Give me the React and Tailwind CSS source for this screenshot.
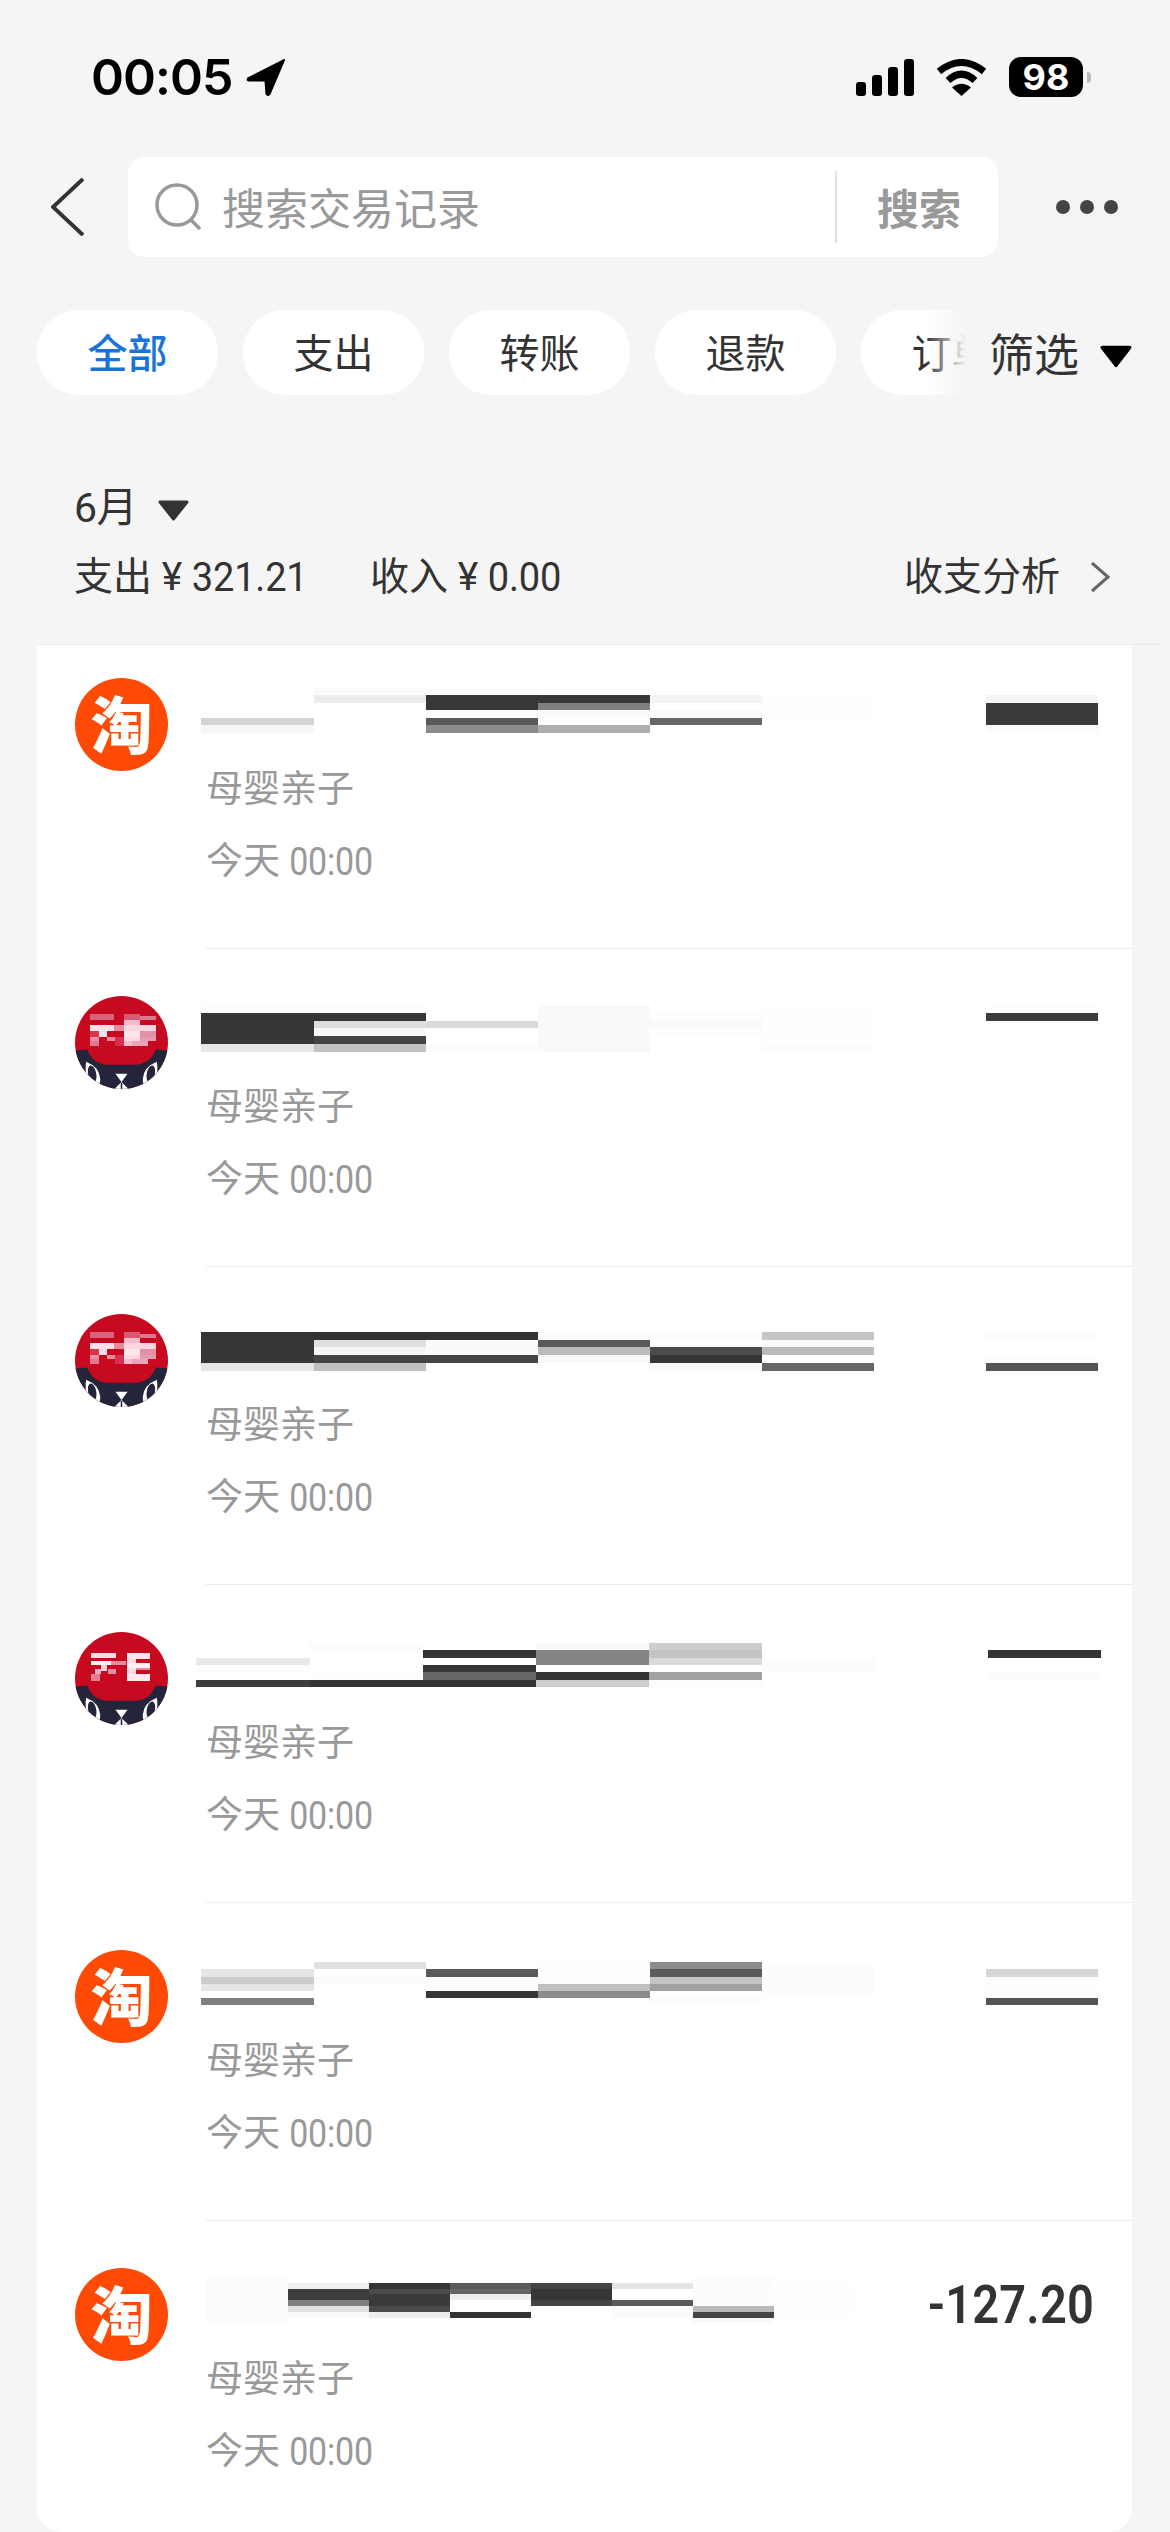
import React from "react";

const c = (x1, x2, ...bands) => bands.map(([y1, y2, fill]) => [x1, y1, x2 - x1, y2 - y1, fill]);

const M1 = [
  ...c(201, 314, [718, 725, "#d4d4d4"], [725, 733, "#f6f6f6"]),
  ...c(314, 426, [688, 695, "#fafafa"], [695, 703, "#ececec"]),
  ...c(426, 538, [688, 695, "#fafafa"], [695, 710, "#373737"], [710, 718, "#fafafa"], [718, 725, "#5a5a5a"], [725, 733, "#8c8c8c"]),
  ...c(538, 650, [688, 695, "#fdfdfd"], [695, 703, "#383838"], [703, 710, "#808080"], [710, 718, "#fafafa"], [718, 725, "#fdfdfd"], [725, 733, "#aeaeae"]),
  ...c(650, 762, [695, 703, "#f3f3f3"], [710, 718, "#fafafa"], [718, 725, "#666666"]),
  ...c(762, 873, [695, 718, "#fdfdfd"]),
  ...c(986, 1098, [695, 703, "#f5f5f5"], [703, 725, "#3a3a3a"], [725, 733, "#fbfbfb"]),
];

const M2 = [
  ...c(201, 314, [1005, 1013, "#fdfdfd"], [1013, 1044, "#363636"], [1044, 1052, "#e6e6e6"]),
  ...c(314, 426, [1005, 1013, "#fdfdfd"], [1013, 1021, "#363636"], [1021, 1028, "#dedede"], [1028, 1036, "#f8f8f8"], [1036, 1044, "#444444"], [1044, 1052, "#c2c2c2"]),
  ...c(426, 538, [1021, 1028, "#dadada"], [1044, 1052, "#fcfcfc"]),
  ...c(538, 650, [1005, 1052, "#f9f9f9"]),
  ...c(650, 762, [1013, 1036, "#fdfdfd"], [1021, 1028, "#f9f9f9"]),
  ...c(762, 873, [1005, 1044, "#fefefe"], [1044, 1052, "#fcfcfc"]),
  ...c(986, 1098, [1005, 1013, "#fdfdfd"], [1013, 1021, "#3c3c3c"]),
];

const M3 = [
  ...c(201, 314, [1332, 1363, "#363636"], [1363, 1371, "#e6e6e6"]),
  ...c(314, 426, [1332, 1340, "#333333"], [1340, 1347, "#e0e0e0"], [1347, 1355, "#f5f5f5"], [1355, 1363, "#444444"], [1363, 1371, "#c0c0c0"]),
  ...c(426, 538, [1332, 1340, "#333333"], [1340, 1355, "#fafafa"], [1355, 1363, "#444444"]),
  ...c(538, 650, [1332, 1340, "#fcfcfc"], [1340, 1347, "#5a5a5a"], [1347, 1355, "#bbbbbb"], [1355, 1363, "#f8f8f8"]),
  ...c(650, 762, [1332, 1340, "#fbfbfb"], [1347, 1355, "#4c4c4c"], [1355, 1363, "#363636"], [1363, 1371, "#fafafa"]),
  ...c(762, 874, [1332, 1340, "#c6c6c6"], [1340, 1347, "#fbfbfb"], [1347, 1355, "#bbbbbb"], [1363, 1371, "#666666"]),
  ...c(986, 1098, [1332, 1340, "#fcfcfc"], [1355, 1363, "#fcfcfc"], [1363, 1371, "#555555"]),
];

const M4 = [
  ...c(196, 310, [1658, 1665, "#e8e8e8"], [1665, 1672, "#fbfbfb"], [1680, 1687, "#3c3c3c"]),
  ...c(310, 423, [1643, 1650, "#fbfbfb"], [1672, 1680, "#fdfdfd"], [1680, 1687, "#333333"]),
  ...c(423, 536, [1650, 1658, "#333333"], [1665, 1672, "#363636"], [1672, 1680, "#666666"], [1680, 1687, "#333333"]),
  ...c(536, 649, [1643, 1650, "#f9f9f9"], [1650, 1665, "#858585"], [1672, 1680, "#333333"], [1680, 1687, "#cccccc"]),
  ...c(649, 762, [1643, 1650, "#cecece"], [1650, 1658, "#c4c4c4"], [1658, 1665, "#dadada"], [1672, 1680, "#a2a2a2"], [1680, 1687, "#fcfcfc"]),
  ...c(762, 875, [1658, 1672, "#fcfcfc"]),
  ...c(988, 1101, [1650, 1658, "#343434"], [1672, 1680, "#fcfcfc"]),
];

const M5 = [
  ...c(201, 314, [1969, 1977, "#e6e6e6"], [1977, 1984, "#cccccc"], [1984, 1991, "#e6e6e6"], [1998, 2005, "#808080"]),
  ...c(314, 426, [1962, 1969, "#e0e0e0"], [1977, 1984, "#fbfbfb"]),
  ...c(426, 538, [1969, 1977, "#5a5a5a"], [1977, 1991, "#fdfdfd"], [1991, 1998, "#363636"]),
  ...c(538, 650, [1962, 1984, "#fdfdfd"], [1984, 1991, "#c0c0c0"], [1991, 1998, "#8c8c8c"]),
  ...c(650, 762, [1962, 1969, "#8c8c8c"], [1969, 1977, "#5a5a5a"], [1977, 1984, "#c4c4c4"], [1984, 1991, "#a0a0a0"], [1998, 2005, "#fcfcfc"]),
  ...c(762, 874, [1962, 1998, "#fcfcfc"]),
  ...c(986, 1098, [1969, 1977, "#d6d6d6"], [1977, 1998, "#fdfdfd"], [1998, 2005, "#555555"]),
];

const M6 = [
  ...c(206, 288, [2277, 2323, "#fcfcfc"]),
  ...c(288, 369, [2283, 2289, "#f0f0f0"], [2289, 2300, "#3e3e3e"], [2300, 2306, "#808080"], [2306, 2312, "#e0e0e0"], [2312, 2318, "#fafafa"]),
  ...c(369, 450, [2283, 2289, "#363636"], [2289, 2294, "#4a4a4a"], [2294, 2306, "#3a3a3a"], [2306, 2312, "#4a4a4a"], [2312, 2318, "#ececec"]),
  ...c(450, 531, [2283, 2289, "#5a5a5a"], [2289, 2294, "#666666"], [2294, 2300, "#eeeeee"], [2312, 2318, "#333333"]),
  ...c(531, 612, [2283, 2289, "#444444"], [2289, 2300, "#363636"], [2300, 2306, "#444444"]),
  ...c(612, 693, [2283, 2289, "#e4e4e4"], [2300, 2306, "#5a5a5a"], [2306, 2318, "#fafafa"]),
  ...c(693, 774, [2277, 2306, "#fcfcfc"], [2306, 2312, "#bbbbbb"], [2312, 2318, "#444444"], [2318, 2323, "#f8f8f8"]),
  ...c(774, 853, [2283, 2318, "#fefefe"]),
];

function Mosaic({ rects, y0, width = 930 }) {
  return (
    <svg
      className="block shrink-0 -ml-4 overflow-visible"
      width={width}
      height={45}
      viewBox={`190 ${y0} ${width} 45`}
      shapeRendering="crispEdges"
      aria-hidden="true"
    >
      {rects.map(([x, y, w, h, fill], i) => (
        <rect key={i} x={x} y={y} width={w} height={h} fill={fill} />
      ))}
    </svg>
  );
}

function Taobao() {
  return (
    <div className="w-[93px] h-[93px] shrink-0 rounded-full bg-[#ff4a05] flex items-center justify-center pb-[6px]">
      <span className="text-white text-[62px] leading-none font-black font-['Noto_Sans_CJK_SC',sans-serif]">淘</span>
    </div>
  );
}

const tmallA = [
  [15, 18, 24, 6, "#d8637a"], [48, 18, 16, 6, "#d55a74"], [64, 20, 16, 4, "#dc7a90"],
  [15, 29, 24, 6, "#ffdfe7"], [39, 29, 9, 6, "#e8899c"], [48, 24, 16, 5, "#f7bccb"], [48, 29, 32, 6, "#fbd5df"],
  [24, 35, 8, 6, "#ffdbe3"], [15, 35, 9, 6, "#d8344e"], [48, 35, 16, 6, "#ffe6ed"], [64, 35, 16, 6, "#e390a6"],
  [15, 41, 9, 4, "#e890a2"], [32, 41, 8, 4, "#e8899c"], [40, 41, 8, 8, "#d8304c"], [48, 41, 16, 4, "#ffd9e2"], [64, 41, 16, 4, "#e59ab0"],
  [15, 45, 9, 4, "#e0798e"], [48, 45, 8, 4, "#f4bccb"], [56, 45, 16, 4, "#e9a6b8"],
];
const tmallB = [
  [16, 21, 25, 5, "#ffdbe4"], [16, 29, 25, 4, "#fff0f4"], [26, 33, 6, 6, "#ffd0dc"], [20, 37, 6, 5, "#f3a9bb"],
  [33, 37, 8, 5, "#e58aa0"], [16, 42, 9, 6, "#e27d93"], [36, 29, 14, 4, "#e8899c"],
  [51, 21, 23, 6, "#ffe3ea"], [51, 27, 9, 4, "#ffd9e2"], [51, 31, 23, 5, "#fff0f4"], [51, 36, 9, 6, "#ffdbe4"],
  [60, 36, 14, 2, "#e58aa0"], [51, 42, 23, 6, "#ffe8ee"],
];

function Tmall({ variant, id }) {
  const cells = variant === "b" ? tmallB : tmallA;
  return (
    <svg className="block shrink-0" width="93" height="93" viewBox="0 0 92 92" aria-hidden="true">
      <defs>
        <clipPath id={id}>
          <circle cx="46" cy="46" r="46" />
        </clipPath>
      </defs>
      <g clipPath={`url(#${id})`}>
        <rect width="92" height="92" fill="#c80a20" />
        <path d="M0 54 L12 53 Q18 68 33 68 L59 68 Q74 68 80 53 L92 54 L92 92 L0 92 Z" fill="#24243a" />
        <g shapeRendering="crispEdges">
          {cells.map(([x, y, w, h, fill], i) => (
            <rect key={i} x={x} y={y} width={w} height={h} fill={fill} />
          ))}
        </g>
        <path d="M11 65 Q24 70 25 82 Q25 88 22 91 Q8 84 11 65 Z" fill="#fff" />
        <ellipse cx="17" cy="77" rx="4" ry="8.5" fill="#24243a" transform="rotate(-12 17 77)" />
        <path d="M81 65 Q68 70 67 82 Q67 88 70 91 Q84 84 81 65 Z" fill="#fff" />
        <ellipse cx="75" cy="77" rx="4" ry="8.5" fill="#24243a" transform="rotate(12 75 77)" />
        <path d="M40 77 L52 77 L46 85 Z" fill="#fff" />
        <path d="M46 85 L39 92 L53 92 Z" fill="#fff" />
        <path d="M46 86 L46 92" stroke="#24243a" strokeWidth="1.5" />
      </g>
    </svg>
  );
}

function TxText() {
  return (
    <div>
      <div className="mt-[21px] h-[72px] leading-[72px] text-[37px] text-[#999999]">母婴亲子</div>
      <div className="h-[72px] leading-[72px] text-[37px] text-[#999999]">
        今天 <span className="inline-block text-[34px] tracking-[-0.2px] scale-y-[1.12]">00:00</span>
      </div>
    </div>
  );
}

function Row({ icon, rects, y0, first, last, amount }) {
  return (
    <div className={`flex pl-[38px] ${first ? "pt-[33px]" : "pt-[47px]"}`}>
      {icon}
      <div className={`flex-1 ml-[38px] pt-[10px] ${last ? "pb-[44px]" : "pb-[50px] border-b border-[#ebebeb]"}`}>
        <div className="flex items-center justify-between h-[45px]">
          <Mosaic rects={rects} y0={y0} width={amount ? 680 : 930} />
          {amount ? (
            <span className="inline-block pr-[38px] pt-[6px] text-[47px] leading-[52px] font-semibold text-[#333333] tracking-[0.2px] scale-y-[1.14]">
              {amount}
            </span>
          ) : null}
        </div>
        <TxText />
      </div>
    </div>
  );
}

function Chip({ children, active }) {
  return (
    <div
      className={`shrink-0 w-[181px] h-[85px] rounded-[42px] bg-white flex items-center justify-center pt-[4px] text-[40px] ${
        active ? "text-[#1a74d8] font-medium" : "text-[#333333]"
      }`}
    >
      <span className="whitespace-nowrap">{children}</span>
    </div>
  );
}

export default function App() {
  return (
    <div className="w-[1170px] h-[2532px] overflow-hidden bg-[#f5f5f5] font-['Roboto','Noto_Sans_CJK_SC',sans-serif] text-[#333333]">
      {/* status bar */}
      <div className="flex items-center justify-between pt-[57px] pl-[91px] pr-[79px] h-[97px]">
        <div className="flex items-center">
          <span className="font-['Inter',sans-serif] text-[50px] leading-[40px] font-semibold text-black w-[155px] tracking-[-1px]">00:05</span>
          <svg width="40" height="39" viewBox="0 0 39 38" aria-hidden="true">
            <path d="M37 2 L2 20 Q1 22 3 22 L19 22 L20 35 Q21 37 23 35 Z" fill="#000" stroke="#000" strokeWidth="2" strokeLinejoin="round" />
          </svg>
        </div>
        <div className="flex items-center">
          <svg width="58" height="37" viewBox="0 0 58 37" aria-hidden="true">
            <rect x="0" y="23" width="10" height="14" rx="3" fill="#000" />
            <rect x="16" y="16" width="10" height="21" rx="3" fill="#000" />
            <rect x="32" y="8" width="10" height="29" rx="3" fill="#000" />
            <rect x="48" y="0" width="10" height="37" rx="3" fill="#000" />
          </svg>
          <svg className="ml-[22px]" width="51" height="37" viewBox="0 0 51 37" aria-hidden="true">
            <path d="M3 12.5 Q25.5 -5.5 48 12.5" fill="none" stroke="#000" strokeWidth="7" />
            <path d="M12 21.5 Q25.5 9 39 21.5" fill="none" stroke="#000" strokeWidth="7" />
            <path d="M25.5 37 L16 28.5 Q25.5 21 35 28.5 Z" fill="#000" />
          </svg>
          <div className="ml-[22px] w-[74px] h-[40px] rounded-[12px] bg-black flex items-center justify-center text-white text-[36px] font-bold leading-none font-['Inter',sans-serif]">
            98
          </div>
          <div className="ml-[4px] w-[4px] h-[11px] rounded-r-[4px] bg-[#bbbbbb]" />
        </div>
      </div>

      {/* search */}
      <div className="flex items-center mt-[60px] pl-[51px] h-[100px]">
        <svg width="33" height="58" viewBox="0 0 33 58" aria-hidden="true">
          <path d="M32 1 L2 29 L32 57" fill="none" stroke="#333333" strokeWidth="4" />
        </svg>
        <div className="ml-[44px] w-[870px] h-[100px] rounded-[16px] bg-white flex items-center">
          <svg className="ml-[27px]" width="47" height="48" viewBox="0 0 47 48" aria-hidden="true">
            <circle cx="22" cy="22" r="20" fill="none" stroke="#999999" strokeWidth="3.5" />
            <path d="M36 37 L45 46" fill="none" stroke="#999999" strokeWidth="3.5" />
          </svg>
          <span className="ml-[20px] flex-1 pt-[6px] text-[43px] text-[#999999] whitespace-nowrap">搜索交易记录</span>
          <div className="w-[2px] h-[72px] bg-[#e2e2e2]" />
          <span className="ml-[40px] mr-[37px] pt-[6px] text-[42px] font-semibold text-[#999999] whitespace-nowrap">搜索</span>
        </div>
        <div className="ml-[58px] flex items-center gap-[10px]">
          <span className="w-[14px] h-[14px] rounded-full bg-[#444444]" />
          <span className="w-[14px] h-[14px] rounded-full bg-[#444444]" />
          <span className="w-[14px] h-[14px] rounded-full bg-[#444444]" />
        </div>
      </div>

      {/* chips */}
      <div className="flex mt-[53px] h-[85px]">
        <div className="relative w-[966px] overflow-hidden flex gap-[25px] pl-[37px]">
          <Chip active>全部</Chip>
          <Chip>支出</Chip>
          <Chip>转账</Chip>
          <Chip>退款</Chip>
          <Chip>订单</Chip>
          <div className="absolute right-0 top-0 bottom-0 w-[41px] bg-gradient-to-r from-transparent to-[#f5f5f5]" />
        </div>
        <div className="flex items-center pl-[23px]">
          <span className="pt-[8px] text-[45px] text-[#333333] whitespace-nowrap">筛选</span>
          <svg className="ml-[21px] mt-[8px]" width="32" height="23" viewBox="0 0 30 21" aria-hidden="true">
            <path d="M2 2 L28 2 L15 19 Z" fill="#000" stroke="#000" strokeWidth="3" strokeLinejoin="round" />
          </svg>
        </div>
      </div>

      {/* month */}
      <div className="flex items-center mt-[86px] pl-[74px] h-[50px]">
        <span className="pt-[5px] text-[41px] text-[#333333] tracking-[-0.5px]">6月</span>
        <svg className="ml-[21px] mt-[8px]" width="31" height="21" viewBox="0 0 31 21" aria-hidden="true">
          <path d="M2 2 L29 2 L15.5 19 Z" fill="#333333" stroke="#333333" strokeWidth="3" strokeLinejoin="round" />
        </svg>
      </div>

      {/* summary */}
      <div className="flex items-center justify-between mt-[21px] pl-[74px] pr-[60px] h-[50px] text-[39px] text-[#333333]">
        <div className="flex items-center">
          <span className="w-[296px] whitespace-nowrap">
            支出 ¥ <span className="inline-block text-[38px] tracking-[-0.2px] scale-y-[1.06]">321.21</span>
          </span>
          <span className="whitespace-nowrap">
            收入 ¥ <span className="inline-block text-[38px] tracking-[-0.2px] scale-y-[1.06]">0.00</span>
          </span>
        </div>
        <div className="flex items-center">
          <span className="whitespace-nowrap">收支分析</span>
          <svg className="ml-[30px]" width="20" height="32" viewBox="0 0 20 32" aria-hidden="true">
            <path d="M2 2 L18 16 L2 30" fill="none" stroke="#666666" strokeWidth="3" />
          </svg>
        </div>
      </div>

      {/* list */}
      <div className="mt-[42px] ml-[37px] mr-[7px] border-t border-[#ebebeb]">
        <div className="w-[1095px] bg-white rounded-b-[24px]">
          <Row first icon={<Taobao />} rects={M1} y0={688} />
          <Row icon={<Tmall id="tm1" />} rects={M2} y0={1006} />
          <Row icon={<Tmall id="tm2" />} rects={M3} y0={1324} />
          <Row icon={<Tmall id="tm3" variant="b" />} rects={M4} y0={1642} />
          <Row icon={<Taobao />} rects={M5} y0={1960} />
          <Row last icon={<Taobao />} rects={M6} y0={2278} amount="-127.20" />
        </div>
      </div>
    </div>
  );
}
